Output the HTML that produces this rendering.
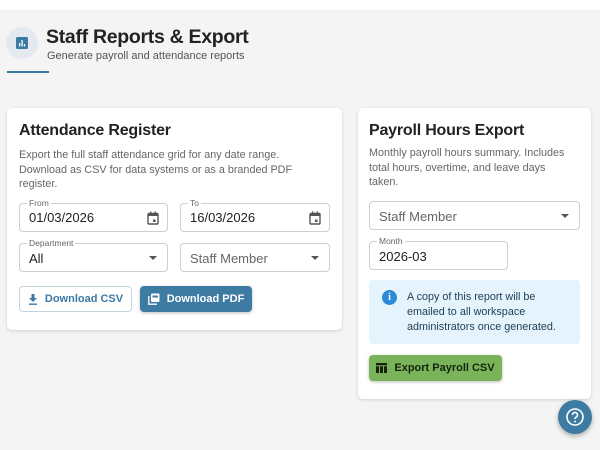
<!DOCTYPE html>
<html><head><style>
*{box-sizing:border-box;margin:0;padding:0}
body{width:600px;height:450px;overflow:hidden;background:#f4f4f4;font-family:"Liberation Sans",sans-serif;position:relative;color:#1f1f1f}
.a{position:absolute}
.top{left:0;top:0;width:600px;height:10px;background:#fff}
.card{background:#fff;border-radius:5px;box-shadow:0 1px 3px rgba(0,0,0,.15)}
.h2{font-size:16px;font-weight:bold;color:#222;letter-spacing:-0.2px}
.desc{font-size:10.8px;color:#666;line-height:14.5px}
.f{border:1px solid #cfcfcf;border-radius:4px;background:#fff}
.lbl{position:absolute;top:-6px;left:7px;background:#fff;padding:0 2px;font-size:8.5px;color:#666;line-height:10px}
.v{position:absolute;left:9px;font-size:13px;color:#222}
.ph{color:#666}
.caret{position:absolute;width:0;height:0;border-left:4px solid transparent;border-right:4px solid transparent;border-top:4px solid #555}
.btn{border-radius:4px;font-size:11px;font-weight:bold;display:flex;align-items:center;justify-content:center;gap:7px}
</style></head><body>
<div class="a top"></div>
<div class="a" style="left:6px;top:27px;width:32px;height:32px;border-radius:50%;background:#e3e9ee"></div>
<svg class="a" style="left:16px;top:37px" width="12" height="12" viewBox="0 0 12 12"><rect width="12" height="12" rx="1.5" fill="#3b7aa3"/><rect x="3" y="6" width="1.3" height="3.5" fill="#fff"/><rect x="5.4" y="3" width="1.3" height="6.5" fill="#fff"/><rect x="7.8" y="7" width="1.3" height="2.5" fill="#fff"/></svg>
<div class="a" style="left:46px;top:26px;font-size:19.5px;font-weight:bold;color:#222;letter-spacing:-0.3px">Staff Reports &amp; Export</div>
<div class="a" style="left:47px;top:50px;font-size:11px;color:#555">Generate payroll and attendance reports</div>
<div class="a" style="left:7px;top:71px;width:42px;height:2px;background:#3b7aa3"></div>

<div class="a card" style="left:7px;top:108px;width:335px;height:222px"></div>
<div class="a h2" style="left:19px;top:122px">Attendance Register</div>
<div class="a desc" style="left:19px;top:148px;width:295px">Export the full staff attendance grid for any date range. Download as CSV for data systems or as a branded PDF register.</div>

<div class="a f" style="left:19px;top:203px;width:149px;height:29px"><span class="lbl">From</span><span class="v" style="top:6px">01/03/2026</span>
<svg class="a" style="right:8px;top:7px" width="12" height="14" viewBox="0 0 12 14"><rect x="1" y="2.5" width="10" height="10.5" rx="1" fill="none" stroke="#555" stroke-width="1.4"/><rect x="1" y="2.5" width="10" height="2.5" fill="#555"/><rect x="3" y="0.5" width="1.4" height="2.5" fill="#555"/><rect x="7.6" y="0.5" width="1.4" height="2.5" fill="#555"/><rect x="6" y="8.5" width="2.5" height="2.5" fill="#555"/></svg></div>
<div class="a f" style="left:180px;top:203px;width:150px;height:29px"><span class="lbl">To</span><span class="v" style="top:6px">16/03/2026</span>
<svg class="a" style="right:8px;top:7px" width="12" height="14" viewBox="0 0 12 14"><rect x="1" y="2.5" width="10" height="10.5" rx="1" fill="none" stroke="#555" stroke-width="1.4"/><rect x="1" y="2.5" width="10" height="2.5" fill="#555"/><rect x="3" y="0.5" width="1.4" height="2.5" fill="#555"/><rect x="7.6" y="0.5" width="1.4" height="2.5" fill="#555"/><rect x="6" y="8.5" width="2.5" height="2.5" fill="#555"/></svg></div>
<div class="a f" style="left:19px;top:243px;width:149px;height:29px"><span class="lbl">Department</span><span class="v" style="top:7px">All</span><span class="caret" style="right:10px;top:12px"></span></div>
<div class="a f" style="left:180px;top:243px;width:150px;height:29px"><span class="v ph" style="top:7px">Staff Member</span><span class="caret" style="right:10px;top:12px"></span></div>

<div class="a btn" style="left:19px;top:286px;width:113px;height:26px;border:1px solid #c5d3dd;color:#3b7aa3;background:#fff">
<svg width="10" height="11" viewBox="0 0 10 11"><path d="M3.5 0h3v4h2.5L5 8 1 4h2.5z" fill="#3b7aa3"/><rect x="1" y="9.5" width="8" height="1.4" fill="#3b7aa3"/></svg>Download CSV</div>
<div class="a btn" style="left:140px;top:286px;width:112px;height:26px;background:#3e7ba2;color:#fff;box-shadow:0 1px 3px rgba(0,0,0,.25)">
<svg width="12" height="12" viewBox="0 0 12 12"><rect x="3" y="0.5" width="8.5" height="8.5" rx="1" fill="#fff"/><path d="M0.8 3v8.2H9" stroke="#fff" stroke-width="1.3" fill="none"/><rect x="4.5" y="2.5" width="5.5" height="2" fill="#3e7ba2"/></svg>Download PDF</div>

<div class="a card" style="left:358px;top:108px;width:233px;height:291px"></div>
<div class="a h2" style="left:369px;top:122px">Payroll Hours Export</div>
<div class="a desc" style="left:369px;top:146px;width:205px">Monthly payroll hours summary. Includes total hours, overtime, and leave days taken.</div>
<div class="a f" style="left:369px;top:201px;width:211px;height:29px"><span class="v ph" style="top:7px">Staff Member</span><span class="caret" style="right:10px;top:12px"></span></div>
<div class="a f" style="left:369px;top:241px;width:139px;height:29px"><span class="lbl">Month</span><span class="v" style="top:7px">2026-03</span></div>
<div class="a" style="left:369px;top:280px;width:211px;height:64px;background:#e5f4fc;border-radius:4px"></div>
<div class="a" style="left:382px;top:290px;width:15px;height:15px;border-radius:50%;background:#2a8ad6;color:#fff;font-size:10px;font-weight:bold;text-align:center;line-height:15px;font-family:'Liberation Serif',serif">i</div>
<div class="a" style="left:407px;top:290px;font-size:10.8px;line-height:14.8px;color:#1f3d55;width:158px">A copy of this report will be emailed to all workspace administrators once generated.</div>
<div class="a btn" style="left:369px;top:355px;width:133px;height:26px;background:#7ab45a;color:#15230f;box-shadow:0 1px 3px rgba(0,0,0,.25)">
<svg width="11" height="10" viewBox="0 0 11 10"><rect width="11" height="2.3" fill="#15230f"/><rect y="3.3" width="3" height="6.7" fill="#15230f"/><rect x="4" y="3.3" width="3" height="6.7" fill="#15230f"/><rect x="8" y="3.3" width="3" height="6.7" fill="#15230f"/></svg>Export Payroll CSV</div>

<div class="a" style="left:558px;top:400px;width:34px;height:34px;border-radius:50%;background:#3e7ba2;box-shadow:0 2px 5px rgba(0,0,0,.3)"></div>
<svg class="a" style="left:565px;top:407px" width="20" height="20" viewBox="0 0 20 20"><circle cx="10" cy="10" r="8" fill="none" stroke="#fff" stroke-width="1.6"/><path d="M7.5 8a2.5 2.5 0 1 1 3.6 2.2c-.8.4-1.1.9-1.1 1.8" fill="none" stroke="#fff" stroke-width="1.6"/><circle cx="10" cy="14.5" r="1" fill="#fff"/></svg>
</body></html>
